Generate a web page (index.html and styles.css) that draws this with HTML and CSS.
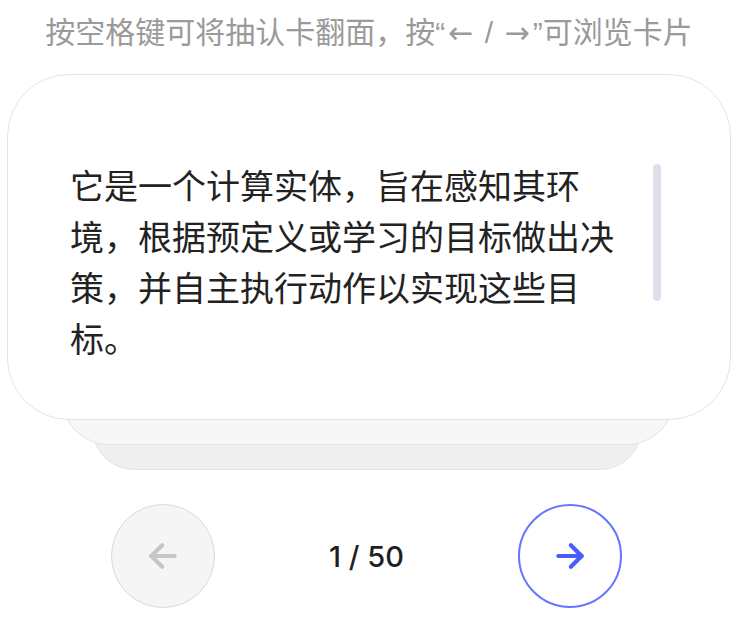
FILE: index.html
```html
<!DOCTYPE html>
<html lang="zh-CN">
<head>
  <meta charset="UTF-8">
  <meta name="viewport" content="width=device-width, initial-scale=1.0">
  <title>抽认卡</title>
  <link rel="stylesheet" href="styles.css">
</head>
<body>

  <p class="hint">按空格键可将抽认卡翻面，按“<span class="key">←</span> / <span class="key">→</span>”可浏览卡片</p>

  <div class="deck">
    <div class="card-back back-far"></div>
    <div class="card-back back-near"></div>
    <div class="card">
      <div class="card-text">它是一个计算实体，旨在感知其环境，根据预定义或学习的目标做出决策，并自主执行动作以实现这些目标。</div>
      <div class="scroll-thumb"></div>
    </div>
  </div>

  <div class="nav">
    <button class="nav-btn prev" disabled>
      <svg width="40" height="40" viewBox="0 0 24 24" fill="none" stroke="currentColor" stroke-width="2.5" stroke-linecap="round" stroke-linejoin="round">
        <path d="M19 12H5"/>
        <path d="M11.5 5.5 5 12l6.5 6.5"/>
      </svg>
    </button>
    <div class="counter">1 / 50</div>
    <button class="nav-btn next">
      <svg width="40" height="40" viewBox="0 0 24 24" fill="none" stroke="currentColor" stroke-width="2.5" stroke-linecap="round" stroke-linejoin="round">
        <path d="M5 12h14"/>
        <path d="M12.5 5.5 19 12l-6.5 6.5"/>
      </svg>
    </button>
  </div>

</body>
</html>
```

FILE: styles.css
```css
body {
  margin: 0;
  background-color: #fff;
  font-family: "Liberation Sans", "Noto Sans CJK SC", sans-serif;
}

.hint {
  margin: 0 0 20px;
  padding-top: 12px;
  font-size: 30px;
  line-height: 42px;
  color: #9a9a9a;
  text-align: center;
  white-space: nowrap;
}

.key {
  margin: 0 3px;
  font-family: "DejaVu Sans", sans-serif;
}

.deck {
  position: relative;
  margin: 0 7px;
  padding-bottom: 50px;
}

.card-back {
  position: absolute;
  top: 60px;
  border: 1px solid #e1e4ee;
}

.back-near {
  left: 54px;
  right: 56px;
  bottom: 25px;
  background-color: #f7f7f7;
  border-radius: 48px;
  z-index: 1;
}

.back-far {
  left: 85px;
  right: 89px;
  bottom: 0;
  background-color: #efefef;
  border-radius: 42px;
}

.card {
  position: relative;
  z-index: 2;
  display: flex;
  height: 346px;
  box-sizing: border-box;
  padding: 84px 0 0 62px;
  background-color: #fff;
  border: 1px solid #e1e4ee;
  border-radius: 62px;
}

.card-text {
  width: 560px;
  font-family: "Noto Sans CJK SC", sans-serif;
  font-size: 34px;
  line-height: 51px;
  color: #222;
}

.scroll-thumb {
  width: 8px;
  height: 137px;
  margin: 5px 0 0 23px;
  background-color: #dde0ea;
  border-radius: 4px;
}

.nav {
  display: flex;
  align-items: center;
  margin-top: 34px;
  padding-left: 111px;
}

.nav-btn {
  display: flex;
  align-items: center;
  justify-content: center;
  width: 104px;
  height: 104px;
  padding: 0;
  border-radius: 50%;
  cursor: pointer;
}

.prev {
  background-color: #f5f5f5;
  border: 1px solid #d9d9d9;
  color: #c6c6c6;
}

.next {
  background-color: #fff;
  border: 2px solid #6675ff;
  color: #4a5cfb;
}

.counter {
  width: 303px;
  text-align: center;
  font-family: "Inter", "Liberation Sans", sans-serif;
  font-size: 29px;
  font-weight: 500;
  color: #1f1f1f;
}
```
